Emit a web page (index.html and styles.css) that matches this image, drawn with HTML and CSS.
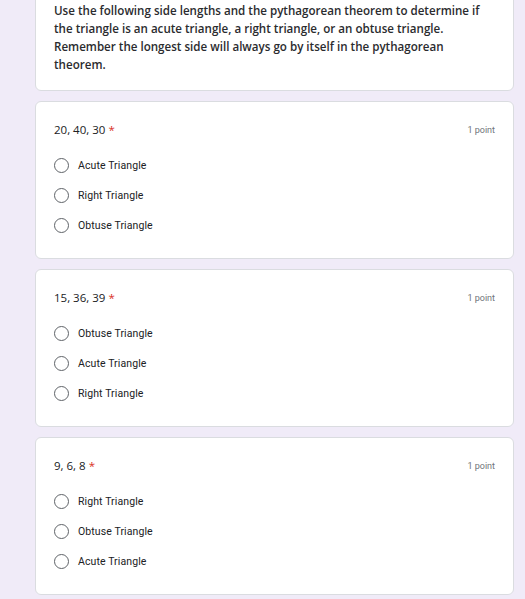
FILE: index.html
```html
<!DOCTYPE html>
<html lang="en">
<head>
<meta charset="utf-8">
<title>Pythagorean Quiz</title>
<link rel="stylesheet" href="styles.css">
</head>
<body>
<main class="form">
  <section class="card intro">
    <p class="desc">Use the following side lengths and the pythagorean theorem to determine if the triangle is an acute triangle, a right triangle, or an obtuse triangle. Remember the longest side will always go by itself in the pythagorean theorem.</p>
  </section>

  <section class="card question">
    <div class="q-head">
      <div class="q-title">20, 40, 30 <span class="req">*</span></div>
      <div class="points">1 point</div>
    </div>
    <ul class="options">
      <li class="option"><span class="radio"></span><span class="label">Acute Triangle</span></li>
      <li class="option"><span class="radio"></span><span class="label">Right Triangle</span></li>
      <li class="option"><span class="radio"></span><span class="label">Obtuse Triangle</span></li>
    </ul>
  </section>

  <section class="card question">
    <div class="q-head">
      <div class="q-title">15, 36, 39 <span class="req">*</span></div>
      <div class="points">1 point</div>
    </div>
    <ul class="options">
      <li class="option"><span class="radio"></span><span class="label">Obtuse Triangle</span></li>
      <li class="option"><span class="radio"></span><span class="label">Acute Triangle</span></li>
      <li class="option"><span class="radio"></span><span class="label">Right Triangle</span></li>
    </ul>
  </section>

  <section class="card question">
    <div class="q-head">
      <div class="q-title">9, 6, 8 <span class="req">*</span></div>
      <div class="points">1 point</div>
    </div>
    <ul class="options">
      <li class="option"><span class="radio"></span><span class="label">Right Triangle</span></li>
      <li class="option"><span class="radio"></span><span class="label">Obtuse Triangle</span></li>
      <li class="option"><span class="radio"></span><span class="label">Acute Triangle</span></li>
    </ul>
  </section>
</main>
</body>
</html>
```

FILE: styles.css
```css
html, body {
  margin: 0;
  padding: 0;
  background: #f0ebf8;
  overflow: hidden;
}

.form {
  display: flex;
  flex-direction: column;
  gap: 10px;
  width: 479px;
  margin-left: 35px;
  margin-top: -17px;
}

.card {
  box-sizing: border-box;
  background: #fff;
  border: 1px solid #dadce0;
  border-radius: 6px;
}

.intro {
  padding: 18px 18px 16px 18px;
}

.desc {
  margin: 0;
  font-family: "Open Sans", "Liberation Sans", sans-serif;
  font-size: 11.6px;
  font-weight: 600;
  line-height: 18px;
  color: #2a2b2e;
}

.question {
  height: 158px;
  padding: 18px;
}

.q-head {
  display: flex;
  justify-content: space-between;
  align-items: center;
  height: 16px;
  padding-top: 2px;
}

.q-title {
  font-family: "Open Sans", "Liberation Sans", sans-serif;
  font-size: 11.5px;
  line-height: 16px;
  color: #202124;
}

.req {
  color: #d93025;
}

.points {
  font-family: Roboto, "Liberation Sans", sans-serif;
  font-size: 9px;
  color: #70757a;
}

.options {
  list-style: none;
  margin: 12px 0 0 0;
  padding: 0;
}

.option {
  display: flex;
  align-items: center;
  height: 30px;
}

.radio {
  box-sizing: border-box;
  width: 15px;
  height: 15px;
  border: 1.5px solid #5f6368;
  border-radius: 50%;
  margin-right: 9px;
  flex: none;
}

.label {
  font-family: Roboto, "Liberation Sans", sans-serif;
  font-size: 10.5px;
  color: #202124;
  letter-spacing: 0.1px;
}
```
